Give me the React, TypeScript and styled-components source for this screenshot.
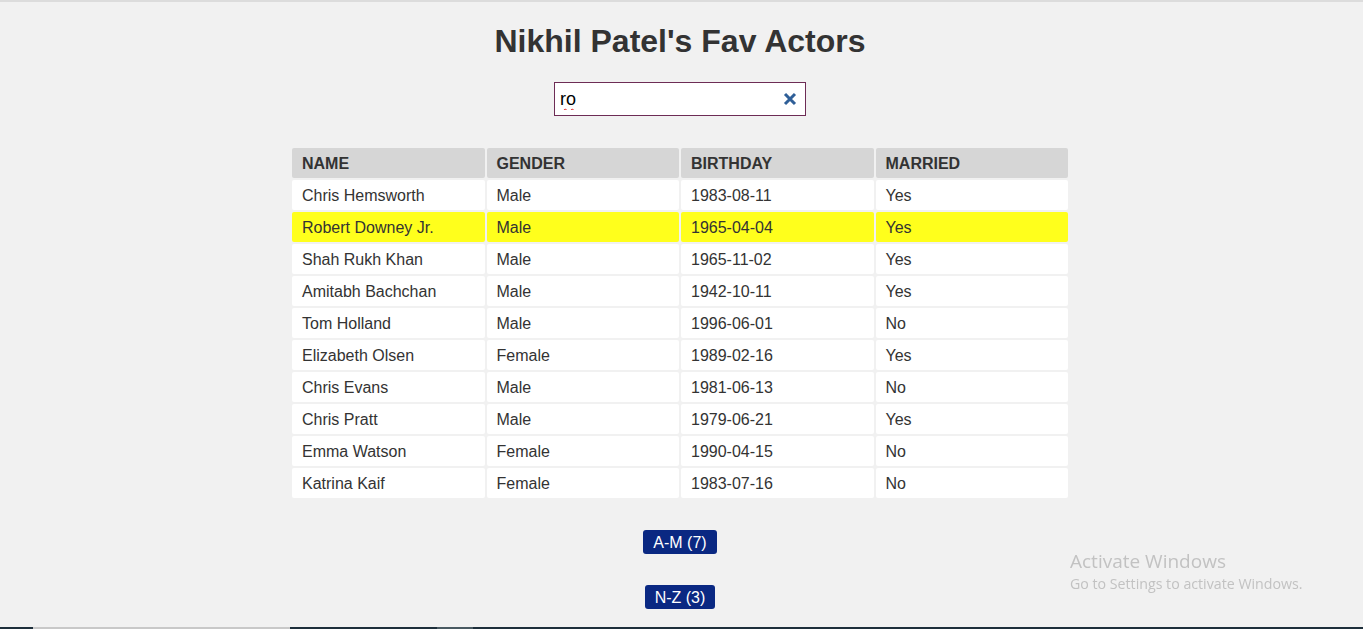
import React, { useState } from 'react'
import styled, { createGlobalStyle } from 'styled-components'

const GlobalStyle = createGlobalStyle`
  html, body {
    margin: 0;
    padding: 0;
    background: #f1f1f1;
  }
  body {
    border-top: 2px solid #dcdcdc;
    font-family: 'Liberation Sans', Arial, sans-serif;
    color: #333;
  }
`

const Page = styled.div`
  display: flex;
  flex-direction: column;
  align-items: center;
  padding: 21px 3px 0 0;
`

const Title = styled.h1`
  margin: 0;
  font-size: 32px;
  font-weight: 700;
  line-height: 37px;
  color: #333;
`

const SearchBox = styled.div`
  margin-top: 22px;
  width: 252px;
  height: 34px;
  box-sizing: border-box;
  border: 1px solid #6d2c55;
  background: #fff;
  display: flex;
  align-items: center;
  padding: 0 8px 0 5px;
`

const SearchInput = styled.input`
  flex: 1;
  min-width: 0;
  border: none;
  outline: none;
  background: transparent;
  font-family: 'Liberation Sans', Arial, sans-serif;
  font-size: 18px;
  color: #000;
  padding: 0;
  text-decoration: underline wavy #e02020;
  text-decoration-thickness: 1px;
  text-underline-offset: 3px;
`

const ClearButton = styled.button`
  border: none;
  background: none;
  padding: 0;
  width: 14px;
  height: 14px;
  display: flex;
  cursor: pointer;
`

const Table = styled.table`
  margin-top: 30px;
  width: 780px;
  border-spacing: 2px;
  table-layout: fixed;
  font-size: 16px;
`

const HeadCell = styled.th`
  background: #d6d6d6;
  text-align: left;
  text-transform: uppercase;
  font-weight: 700;
  padding: 7px 10px 5px;
  line-height: 18px;
  border-radius: 2px;
`

const Cell = styled.td<{ $hl?: boolean }>`
  background: ${(p) => (p.$hl ? '#ffff1c' : '#ffffff')};
  padding: 7px 10px 5px;
  line-height: 18px;
  border-radius: 2px;
`

const Groups = styled.div`
  display: flex;
  flex-direction: column;
  align-items: center;
  gap: 31px;
  margin-top: 30px;
`

const GroupButton = styled.button`
  background: #0a2882;
  color: #fff;
  border: none;
  border-radius: 3px;
  font-family: 'Liberation Sans', Arial, sans-serif;
  font-size: 16px;
  line-height: 18px;
  height: 24px;
  padding: 1px 10px 0;
  cursor: pointer;
`

const Watermark = styled.div`
  position: fixed;
  left: 1070px;
  top: 548px;
  font-family: 'Open Sans', 'Noto Sans', sans-serif;
  color: #c2c2c2;
  pointer-events: none;
`

const WatermarkTitle = styled.div`
  font-size: 19px;
  line-height: 26px;
`

const WatermarkSub = styled.div`
  font-size: 14.2px;
  line-height: 19px;
`

const Taskbar = styled.div`
  position: fixed;
  left: 0;
  right: 0;
  bottom: 0;
  height: 2px;
  display: flex;
  background: #1e2f3b;
`

const TaskSeg = styled.div<{ $w: number; $c: string }>`
  width: ${(p) => p.$w}px;
  background: ${(p) => p.$c};
`

const actors = [
  ['Chris Hemsworth', 'Male', '1983-08-11', 'Yes'],
  ['Robert Downey Jr.', 'Male', '1965-04-04', 'Yes'],
  ['Shah Rukh Khan', 'Male', '1965-11-02', 'Yes'],
  ['Amitabh Bachchan', 'Male', '1942-10-11', 'Yes'],
  ['Tom Holland', 'Male', '1996-06-01', 'No'],
  ['Elizabeth Olsen', 'Female', '1989-02-16', 'Yes'],
  ['Chris Evans', 'Male', '1981-06-13', 'No'],
  ['Chris Pratt', 'Male', '1979-06-21', 'Yes'],
  ['Emma Watson', 'Female', '1990-04-15', 'No'],
  ['Katrina Kaif', 'Female', '1983-07-16', 'No'],
]

const App = () => {
  const [query, setQuery] = useState('ro')
  const q = query.toLowerCase()

  return (
    <>
      <GlobalStyle />
      <Page>
        <Title>Nikhil Patel's Fav Actors</Title>
        <SearchBox>
          <SearchInput value={query} onChange={(e) => setQuery(e.target.value)} />
          <ClearButton onClick={() => setQuery('')} aria-label="clear">
            <svg width="14" height="14" viewBox="0 0 14 14">
              <path d="M2 2 L12 12 M12 2 L2 12" stroke="#2f5f98" strokeWidth="3" strokeLinecap="butt" />
            </svg>
          </ClearButton>
        </SearchBox>
        <Table>
          <thead>
            <tr>
              <HeadCell>Name</HeadCell>
              <HeadCell>Gender</HeadCell>
              <HeadCell>Birthday</HeadCell>
              <HeadCell>Married</HeadCell>
            </tr>
          </thead>
          <tbody>
            {actors.map((a) => {
              const hl = q.length > 0 && a[0].toLowerCase().startsWith(q)
              return (
                <tr key={a[0]}>
                  {a.map((v, i) => (
                    <Cell key={i} $hl={hl}>{v}</Cell>
                  ))}
                </tr>
              )
            })}
          </tbody>
        </Table>
        <Groups>
          <GroupButton>A-M (7)</GroupButton>
          <GroupButton>N-Z (3)</GroupButton>
        </Groups>
      </Page>
      <Watermark>
        <WatermarkTitle>Activate Windows</WatermarkTitle>
        <WatermarkSub>Go to Settings to activate Windows.</WatermarkSub>
      </Watermark>
      <Taskbar>
        <TaskSeg $w={33} $c="#1e2f3b" />
        <TaskSeg $w={257} $c="#c8c8c8" />
        <TaskSeg $w={147} $c="#1e2f3b" />
        <TaskSeg $w={36} $c="#4a5a62" />
      </Taskbar>
    </>
  )
}

export default App
